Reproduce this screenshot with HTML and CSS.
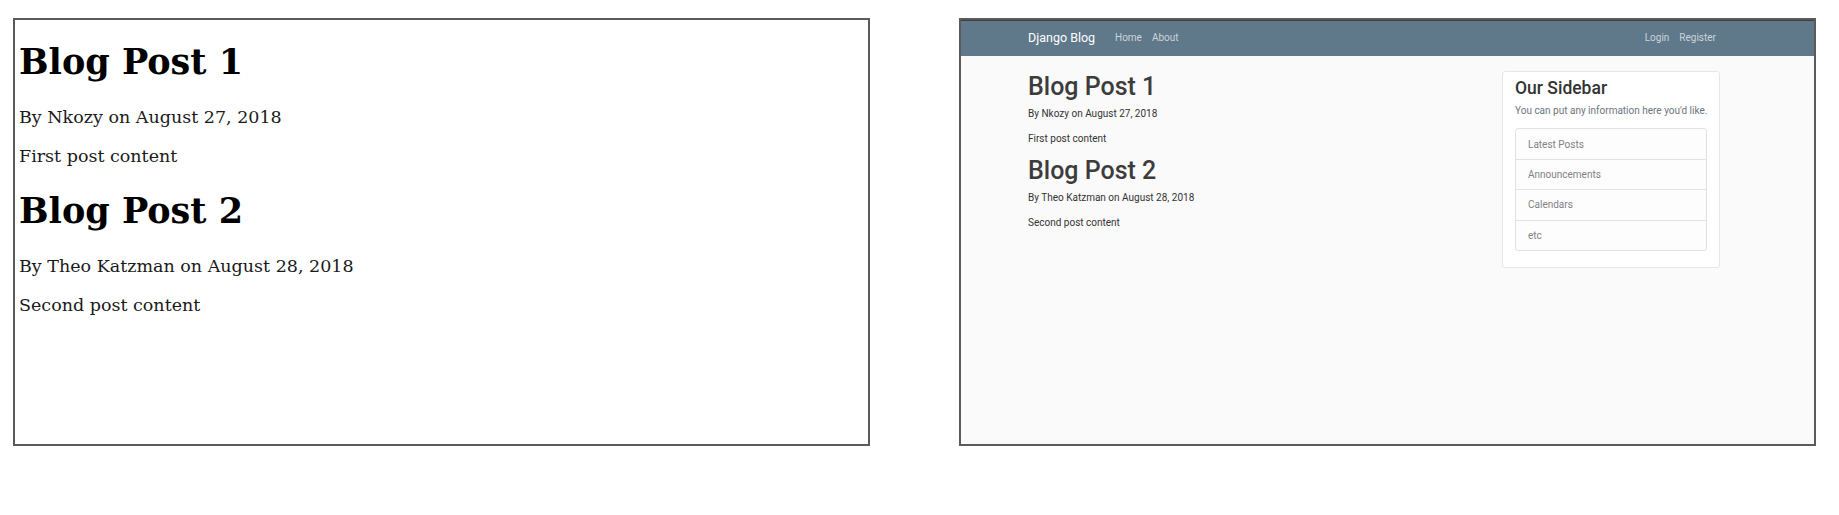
FILE: index.html
```html
<!DOCTYPE html>
<html lang="en">
<head>
<meta charset="utf-8">
<title>Django Blog</title>
<link rel="stylesheet" href="styles.css">
</head>
<body>
<main class="comparison">
  <section class="frame plain">
    <article>
      <h1>Blog Post 1</h1>
      <p>By Nkozy on August 27, 2018</p>
      <p>First post content</p>
    </article>
    <article>
      <h1>Blog Post 2</h1>
      <p>By Theo Katzman on August 28, 2018</p>
      <p>Second post content</p>
    </article>
  </section>
  <section class="frame styled">
    <header class="navbar">
      <a class="brand">Django Blog</a>
      <nav class="links"><a>Home</a><a>About</a></nav>
      <nav class="links account"><a>Login</a><a>Register</a></nav>
    </header>
    <div class="content">
      <div class="posts">
        <article>
          <h1>Blog Post 1</h1>
          <p>By Nkozy on August 27, 2018</p>
          <p>First post content</p>
        </article>
        <article>
          <h1>Blog Post 2</h1>
          <p>By Theo Katzman on August 28, 2018</p>
          <p>Second post content</p>
        </article>
      </div>
      <aside class="sidebar">
        <h3>Our Sidebar</h3>
        <p>You can put any information here you'd like.</p>
        <ul class="list">
          <li>Latest Posts</li>
          <li>Announcements</li>
          <li>Calendars</li>
          <li>etc</li>
        </ul>
      </aside>
    </div>
  </section>
</main>
</body>
</html>
```
FILE: styles.css
```css
* { box-sizing: border-box; }
body { margin: 0; background: #fff; }
h1, h3, p, ul { margin: 0; padding: 0; }

.comparison {
  display: flex;
  gap: 89px;
  padding: 18px 0 0 13px;
}
.frame {
  flex: none;
  width: 857px;
  height: 428px;
  border: 2px solid #5b5b5b;
}

.plain {
  padding: 20px 0 0 4px;
  font-family: "DejaVu Serif", serif;
  font-size: 17.5px;
  color: #1a1a1a;
}
.plain article { height: 149px; }
.plain h1 {
  font-size: 35px;
  line-height: 44px;
  margin-bottom: 22px;
  color: #000;
}
.plain p { line-height: 22px; margin-bottom: 17px; }

.styled {
  background: #fafafa;
  font-family: Roboto, sans-serif;
  font-size: 10px;
  line-height: 15px;
  color: #333;
}
.navbar {
  display: flex;
  align-items: center;
  height: 36px;
  padding: 0 98px 2px 67px;
  background: #5f788a;
  border-top: 1px solid #3b3f42;
}
.brand { font-size: 12.5px; color: #fff; width: 87px; }
.links { display: flex; gap: 10px; color: #cbd5db; }
.account { margin-left: auto; }

.content {
  display: flex;
  justify-content: space-between;
  align-items: flex-start;
  padding: 15px 94px 0 67px;
}
.styled h1 {
  font-size: 25px;
  font-weight: 500;
  line-height: 32px;
  margin-bottom: 3px;
  color: #3c3c3c;
}
.posts article { height: 84px; }
.posts p { margin-bottom: 10px; }

.sidebar {
  width: 218px;
  height: 197px;
  padding: 6px 12px;
  background: #fff;
  border: 1px solid #e6e6e6;
  border-radius: 3px;
}
.sidebar h3 {
  font-size: 17.5px;
  font-weight: 500;
  line-height: 21px;
  margin-bottom: 4px;
}
.sidebar p { color: #6c757d; margin-bottom: 10px; white-space: nowrap; }
.list {
  width: 192px;
  list-style: none;
  background: #fdfdfd;
  border: 1px solid #e2e2e2;
  border-radius: 3px;
  color: #818182;
}
.list li { height: 30.2px; padding: 8px 12px; }
.list li + li { border-top: 1px solid #e2e2e2; padding-top: 7px; }
```
